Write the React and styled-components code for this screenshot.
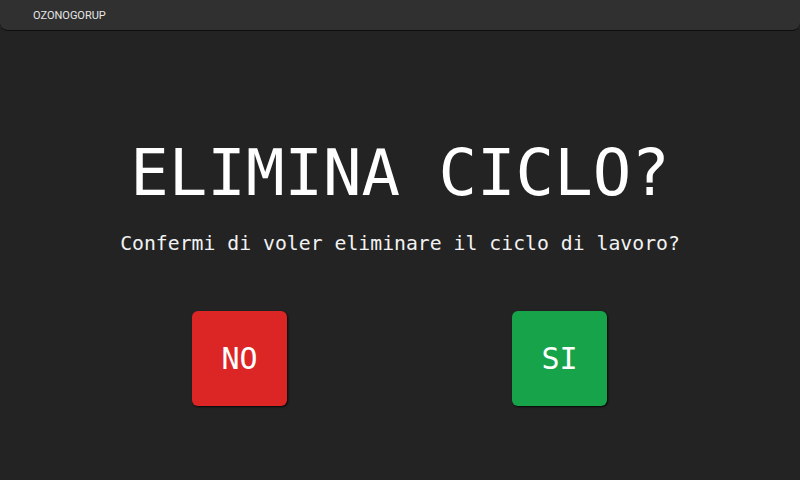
import styled, { createGlobalStyle } from 'styled-components';

const GlobalStyle = createGlobalStyle`
  html, body {
    margin: 0;
    padding: 0;
    background: #232323;
  }
  body {
    font-family: "DejaVu Sans Mono", "Liberation Mono", monospace;
    color: #f5f5f5;
  }
`;

const Screen = styled.div`
  width: 800px;
  height: 480px;
  display: flex;
  flex-direction: column;
  background: #232323;
  overflow: hidden;
`;

const TopBar = styled.header`
  height: 30px;
  display: flex;
  align-items: center;
  padding: 0 33px;
  background: #303030;
  border-bottom: 1px solid #0e0e0e;
  border-radius: 0 0 8px 8px;
  font-family: Roboto, "Liberation Sans", sans-serif;
  font-size: 11px;
  color: #e6e6e6;
`;

const Content = styled.main`
  flex: 1;
  display: flex;
  flex-direction: column;
  align-items: center;
  padding-top: 110px;
`;

const Title = styled.h1`
  margin: 0;
  font-size: 64px;
  font-weight: normal;
  line-height: 1;
  color: #ffffff;
`;

const Message = styled.p`
  margin: 29px 0 0;
  font-size: 19.8px;
  line-height: 1;
  color: #f2f2f2;
`;

const Actions = styled.div`
  margin: 57px 1px 0 0;
  display: flex;
  gap: 225px;
`;

const ChoiceButton = styled.button`
  width: 95px;
  height: 95px;
  border: none;
  border-radius: 6px;
  background: ${(p) => (p.$variant === 'danger' ? '#dc2626' : '#17a34a')};
  box-shadow: 1px 1px 2px rgba(0, 0, 0, 0.8);
  color: #ffffff;
  font-family: "DejaVu Sans Mono", monospace;
  font-size: 30px;
  cursor: pointer;
`;

const App = () => (
    <>
        <GlobalStyle />
        <Screen>
            <TopBar>OZONOGORUP</TopBar>
            <Content>
                <Title>ELIMINA CICLO?</Title>
                <Message>Confermi di voler eliminare il ciclo di lavoro?</Message>
                <Actions>
                    <ChoiceButton $variant="danger">NO</ChoiceButton>
                    <ChoiceButton $variant="confirm">SI</ChoiceButton>
                </Actions>
            </Content>
        </Screen>
    </>
);

export default App;
